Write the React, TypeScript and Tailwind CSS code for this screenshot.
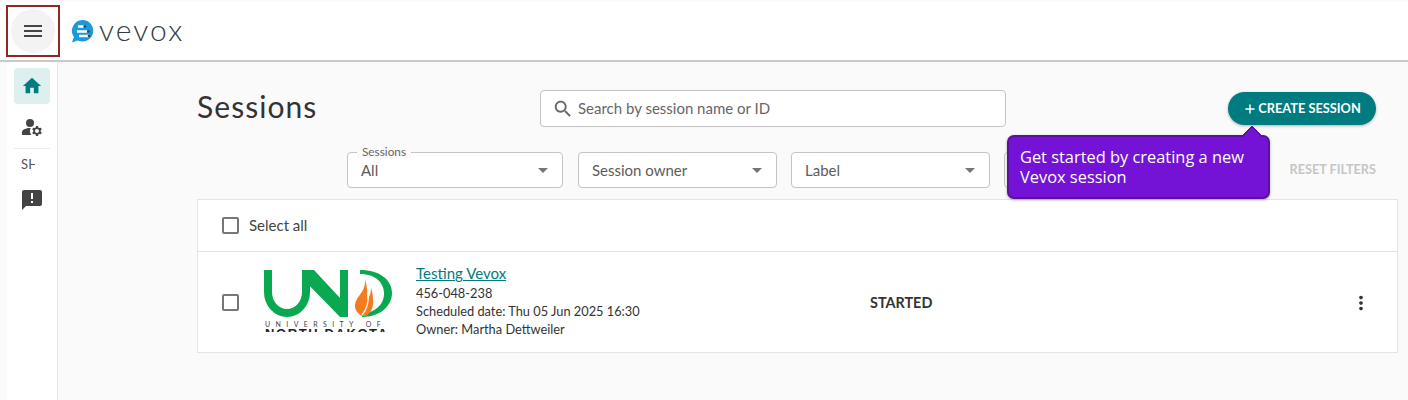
import { Plus } from 'lucide-react';

const FONT = "font-['Lato','Open_Sans',sans-serif]";

function FilterSelect({ label, value, width }: { label?: string; value?: string; width: string }) {
  return (
    <div className={`relative flex h-[36px] items-center justify-between rounded-[4px] border border-[#c4c4c4] bg-white pl-[13px] pr-[14px] ${width}`}>
      {label && (
        <span className="absolute left-[9px] top-[-8px] bg-[#fafafa] px-[5px] text-[11.8px] leading-[13px] text-[#666]">
          {label}
        </span>
      )}
      <span className={`text-[15px] text-[#5c5c5c] ${label ? 'pt-[1px]' : ''}`}>{value}</span>
      <span className="h-0 w-0 border-x-[5px] border-t-[5px] border-x-transparent border-t-[#757575]" />
    </div>
  );
}

function MdIcon({ d, size, className }: { d: string; size: number; className?: string }) {
  return (
    <svg width={size} height={size} viewBox="0 0 24 24" fill="currentColor" className={className}>
      <path d={d} />
    </svg>
  );
}

function VevoxMark() {
  return (
    <svg width="24" height="24" viewBox="0 0 24 24">
      <path d="M12.500 1a10.800 10.800 0 1 1-4.800 20.500L2 23.500l1.900-5.500A10.800 10.800 0 0 1 12.500 1z" fill="#1c9ad6" />
      <path d="M8 7.500h5.500M7 12.500h10M9 17h10" stroke="#fff" strokeWidth="2.600" />
      <circle cx="15" cy="7.500" r="1.300" fill="#37474f" />
      <circle cx="18.500" cy="12.500" r="1.300" fill="#37474f" />
      <circle cx="19" cy="17" r="1.300" fill="#37474f" />
    </svg>
  );
}

// the logo image is cropped by its box in the original, so NORTH DAKOTA only shows its top
function UndLogo() {
  return (
    <div className="relative mb-[4px] h-[64px] w-[128px] shrink-0 overflow-hidden">
      <svg width="128" height="50" viewBox="0 0 128 50" className="block">
        <path d="M4 2v22a19 21 0 0 0 38 0V2" fill="none" stroke="#0aa850" strokeWidth="8" />
        <path d="M38 2h12l26 28V2h8v47h-8L38 10z" fill="#0aa850" />
        <path d="M96 2c20 0 32 10 32 23 0 13-12 24-30 24v-3c14-2 22-10 22-20 0-11-8-20-24-20z" fill="#0aa850" />
        <path d="M101 11c1 9-4 14-8 20-4 7-2 13 5 17h4c5-3 8-9 7-17 0-4-1-8-2-11 0 6-2 9-4 12 1-7 0-14-2-21z" fill="#f47b20" />
        <path d="M104 25c1 8-1 16-6 22" fill="none" stroke="#fafafa" strokeWidth="1.300" />
      </svg>
      <div className="absolute left-[1px] top-[53px] whitespace-nowrap text-[7px] leading-[7px] tracking-[5.400px] text-[#444]">
        UNIVERSITY OF
      </div>
      <div className="absolute left-[1px] top-[60px] whitespace-nowrap font-['Liberation_Sans',sans-serif] text-[13px] font-bold leading-[12px] tracking-[1.600px] text-[#222]">
        NORTH DAKOTA
      </div>
    </div>
  );
}

export default function App() {
  return (
    <div className={`relative flex h-[400px] w-[1408px] flex-col overflow-hidden bg-[#fafafa] ${FONT}`}>
      <header className="mt-[2px] flex h-[60px] shrink-0 items-center border-b-2 border-[#c9c9c9] bg-white">
        <div className="ml-[6px] flex h-[52px] w-[54px] items-center justify-center border-2 border-[#8c2a22]">
          <div className="flex h-[44px] w-[44px] items-center justify-center rounded-full bg-[#f3f3f3]">
            <MdIcon d="M3 18h18v-2H3v2zm0-5h18v-2H3v2zm0-7v2h18V6H3z" size={24} className="text-[#444]" />
          </div>
        </div>
        <div className="ml-[10px] flex items-center gap-[5px]">
          <VevoxMark />
          <span className="pb-[5px] text-[30px] font-light leading-none tracking-[0.07em] text-[#333c40]">vevox</span>
        </div>
      </header>

      <div className="flex min-h-0 flex-1">
        <aside className="ml-[7px] flex w-[51px] shrink-0 flex-col items-center border-r border-[#e6e6e6] bg-white pt-[6px]">
          <div className="flex h-[36px] w-[36px] items-center justify-center rounded-[4px] bg-[#deeff0]">
            <MdIcon d="M10 20v-6h4v6h5v-8h3L12 3 2 12h3v8z" size={22} className="text-[#007c80]" />
          </div>
          <svg className="mt-[11px]" width="24" height="24" viewBox="0 0 24 24" fill="#444">
            <circle cx="10" cy="8" r="4" />
            <path d="M10.670 13.020C10.450 13.010 10.230 13 10 13c-2.420 0-4.680.67-6.610 1.820C2.510 15.340 2 16.320 2 17.350V20h9.260c-.79-1.130-1.260-2.510-1.260-4 0-1.070.25-2.120.67-2.980z" />
            <path d="M20.750 16c0-.22-.03-.42-.06-.63l1.140-1.010-1-1.730-1.450.49c-.32-.27-.68-.48-1.080-.63L18 11h-2l-.3 1.490c-.4.15-.76.36-1.080.63l-1.450-.49-1 1.730 1.140 1.010c-.03.21-.06.41-.06.63s.03.42.06.63l-1.140 1.010 1 1.730 1.450-.49c.32.27.68.48 1.080.63L16 21h2l.3-1.490c.4-.15.76-.36 1.080-.63l1.450.49 1-1.730-1.140-1.010c.03-.21.06-.41.06-.63zM17 18c-1.100 0-2-.9-2-2s.9-2 2-2 2 .9 2 2-.9 2-2 2z" />
          </svg>
          <div className="mt-[9px] h-px w-[36px] bg-[#ececec]" />
          <div className="mt-[8px] h-[15px] w-[36px] pl-[7px] text-[13px] leading-[15px] tracking-[0.02em] text-[#555]">
            <span className="inline-block w-[14px] overflow-hidden whitespace-nowrap">SH</span>
          </div>
          <MdIcon
            d="M20 2H4c-1.100 0-1.990.9-1.990 2L2 22l4-4h14c1.100 0 2-.9 2-2V4c0-1.100-.9-2-2-2zm-7 9h-2V5h2v6zm0 4h-2v-2h2v2z"
            size={24}
            className="mt-[16px] text-[#444]"
          />
        </aside>

        <main className="min-w-0 flex-1 pl-[139px] pr-[10px]">
          <div className="flex items-start pt-[28px]">
            <h1 className="w-[343px] text-[30px] font-normal leading-[32px] tracking-[0.035em] text-[#333]">Sessions</h1>
            <div className="flex h-[37px] w-[466px] items-center rounded-[4px] border border-[#c4c4c4] bg-white pl-[11px]">
              <MdIcon
                d="M15.500 14h-.79l-.28-.27C15.410 12.590 16 11.110 16 9.500 16 5.910 13.090 3 9.500 3S3 5.910 3 9.500 5.910 16 9.500 16c1.610 0 3.090-.59 4.230-1.570l.27.28v.79l5 4.990L20.490 19l-4.990-5zm-6 0C7.010 14 5 11.990 5 9.500S7.010 5 9.500 5 14 7.010 14 9.500 11.990 14 9.500 14z"
                size={22}
                className="text-[#666]"
              />
              <span className="ml-[4px] text-[15px] text-[#666]">Search by session name or ID</span>
            </div>
            <button className="ml-[222px] mt-[2px] flex h-[33px] w-[148px] items-center justify-center rounded-full bg-[#007c80] text-[12.800px] font-bold text-white shadow-[0_1px_3px_rgba(0,0,0,0.3)]">
              <Plus size={14} strokeWidth={2.500} className="mr-[1px]" />
              CREATE SESSION
            </button>
          </div>

          <div className="mt-[25px] flex items-center pl-[150px]">
            <div className="flex gap-[14px]">
              <FilterSelect label="Sessions" value="All" width="mr-[1px] w-[216px]" />
              <FilterSelect value="Session owner" width="w-[199px]" />
              <FilterSelect value="Label" width="w-[199px]" />
              <FilterSelect width="w-[199px]" />
            </div>
            <span className="ml-auto mr-[22px] text-[12.700px] font-bold text-[#c6c6c6]">RESET FILTERS</span>
          </div>

          <section className="mt-[11px] border border-[#e4e4e4] bg-white">
            <div className="flex h-[52px] items-center border-b border-[#e4e4e4] pl-[24px]">
              <span className="h-[17px] w-[17px] rounded-[2px] border-2 border-[#777]" />
              <span className="ml-[10px] text-[15px] text-[#444]">Select all</span>
            </div>
            <div className="flex h-[100px] items-center pl-[24px] pr-[25px]">
              <span className="h-[17px] w-[17px] shrink-0 rounded-[2px] border-2 border-[#777]" />
              <div className="ml-[25px]"><UndLogo /></div>
              <div className="mb-[1px] ml-[24px] w-[454px] text-[12.800px] leading-[18.300px] text-[#333]">
                <a className="text-[15px] leading-[19px] text-[#007c80] underline">Testing Vevox</a>
                <div>456-048-238</div>
                <div>Scheduled date: Thu 05 Jun 2025 16:30</div>
                <div>Owner: Martha Dettweiler</div>
              </div>
              <span className="mt-[1px] text-[14.400px] font-bold text-[#333]">STARTED</span>
              <MdIcon
                d="M12 8c1.100 0 2-.9 2-2s-.9-2-2-2-2 .9-2 2 .9 2 2 2zm0 2c-1.100 0-2 .9-2 2s.9 2 2 2 2-.9 2-2-.9-2-2-2zm0 6c-1.100 0-2 .9-2 2s.9 2 2 2 2-.9 2-2-.9-2-2-2z"
                size={22}
                className="ml-auto mt-[1px] text-[#333]"
              />
            </div>
          </section>
        </main>
      </div>

      <div className="absolute left-[1007px] top-[135px] h-[64px] w-[263px] rounded-[7px] border-2 border-[#5c109e] bg-[#7413d6] pl-[11px] pt-[10px] font-['Open_Sans',sans-serif] text-[16.400px] leading-[20px] text-white shadow-[0_1px_3px_rgba(0,0,0,0.3)]">
        <span className="absolute left-[236px] top-[-9px] h-[14px] w-[14px] rotate-45 rounded-[2px] border-l-2 border-t-2 border-[#5c109e] bg-[#7413d6]" />
        <span className="relative">Get started by creating a new</span>
        <br />
        Vevox session
      </div>
    </div>
  );
}
